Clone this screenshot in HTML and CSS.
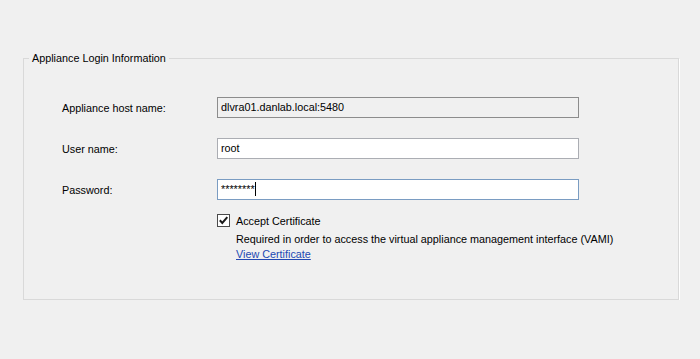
FILE: index.html
```html
<!DOCTYPE html>
<html lang="en">
<head>
    <meta charset="UTF-8">
    <title>Appliance Login Information</title>
    <link rel="stylesheet" href="styles.css">
</head>
<body>
    <fieldset class="group">
        <legend class="group-title">Appliance Login Information</legend>

        <div class="form-grid">
            <div class="label">Appliance host name:</div>
            <div class="field readonly">dlvra01.danlab.local:5480</div>

            <div class="label">User name:</div>
            <div class="field">root</div>

            <div class="label">Password:</div>
            <div class="field focused">********<span class="caret"></span></div>
        </div>

        <!-- Certificate section -->
        <div class="cert">
            <div class="check-row">
                <span class="checkbox">
                    <svg width="11" height="11" viewBox="0 0 11 11">
                        <path d="M1.8 5.2 L4.3 7.9 L9.3 2.2" fill="none" stroke="#1a1a1a" stroke-width="2"/>
                    </svg>
                </span>
                <span>Accept Certificate</span>
            </div>
            <div class="cert-note">Required in order to access the virtual appliance management interface (VAMI)</div>
            <a class="cert-link" href="#">View Certificate</a>
        </div>
    </fieldset>
</body>
</html>
```

FILE: styles.css
```css
/* Global */
body {
    margin: 0;
    background-color: #f0f0f0;
    font-family: 'Liberation Sans', Arial, sans-serif;
    font-size: 10.8px;
    color: #000;
}

/* Group box */
.group {
    box-sizing: border-box;
    margin: 52px 0 0 23px;
    width: 656px;
    height: 248px;
    padding: 0 0 0 38px;
    border: 1px solid #d9d9d9;
    box-shadow: 1px 1px 0 #fff;
}

.group-title {
    padding: 0 3px;
    margin-left: -33px;
}

/* Form */
.form-grid {
    display: grid;
    grid-template-columns: 155px 362px;
    row-gap: 20px;
    align-items: center;
    margin-top: 33px;
}

.field {
    height: 19px;
    line-height: 19px;
    padding: 0 3px;
    border: 1px solid #abadb3;
    background-color: #fff;
}

.field.readonly {
    background-color: #f0f0f0;
    border-color: #8c8c8c;
}

.field.focused {
    border-color: #7a9cc2;
}

.caret {
    display: inline-block;
    width: 1px;
    height: 14px;
    background-color: #000;
    vertical-align: -3px;
}

/* Certificate */
.cert {
    margin: 14px 0 0 155px;
}

.check-row {
    display: flex;
    align-items: center;
    gap: 6px;
}

.checkbox {
    width: 11px;
    height: 11px;
    border: 1px solid #4a4a4a;
    background-color: #fff;
    display: flex;
}

.cert-note {
    margin: 6px 0 0 19px;
}

.cert-link {
    display: inline-block;
    margin: 3px 0 0 19px;
    color: #2249b3;
}
```
